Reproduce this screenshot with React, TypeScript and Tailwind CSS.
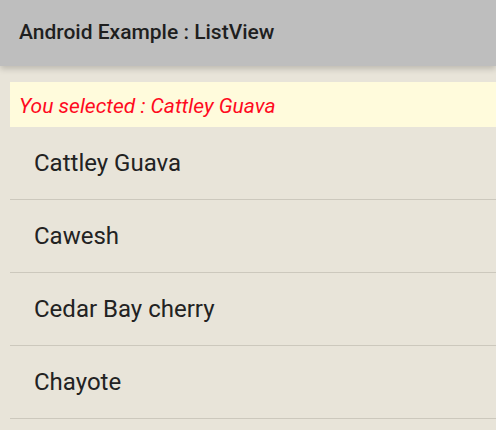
import React from 'react';

const fruits = ['Cattley Guava', 'Cawesh', 'Cedar Bay cherry', 'Chayote'];

export default function App() {
  return (
    <div
      className="w-[496px] h-[430px] overflow-hidden bg-[#e8e4d9] flex flex-col"
      style={{ fontFamily: 'Roboto, "Noto Sans", sans-serif' }}
    >
      {/* Action bar */}
      <div className="h-[66px] shrink-0 bg-[#bebebe] flex items-center px-[19px] shadow-[0_3px_6px_rgba(0,0,0,0.18)] relative z-10">
        <span className="text-[21px] font-medium text-[#1f1f1f]">Android Example : ListView</span>
      </div>

      <div className="pl-[10px] pt-4 flex flex-col">
        {/* Selection label */}
        <div className="h-[45px] bg-[#fffbdc] flex items-center px-[9px] pt-1">
          <span className="text-[21px] italic text-[#ff0a1e]">You selected : Cattley Guava</span>
        </div>

        {/* List */}
        <ul className="flex flex-col">
          {fruits.map((f) => (
            <li
              key={f}
              className="h-[73px] shrink-0 border-b border-[#ccc8bd] flex items-center pl-6 text-[24px] text-[#222222]"
            >
              {f}
            </li>
          ))}
        </ul>
      </div>
    </div>
  );
}
